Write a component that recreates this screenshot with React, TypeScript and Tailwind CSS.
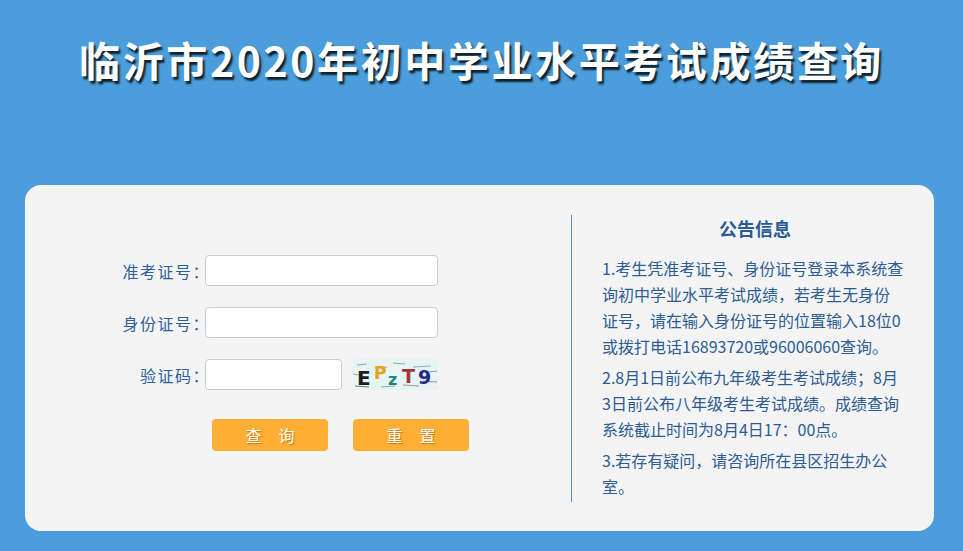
function Captcha() {
  return (
    <svg width="85" height="31" viewBox="0 0 85 31" className="ml-[11px]">
      <rect width="85" height="31" fill="#e6f4f3" />
      <g stroke="#8aa" strokeWidth="1">
        <line x1="4" y1="6" x2="14" y2="5" />
        <line x1="22" y1="9" x2="34" y2="8" stroke="#c99" />
        <line x1="40" y1="4" x2="52" y2="5" />
        <line x1="60" y1="8" x2="78" y2="7" stroke="#9ab" />
        <line x1="2" y1="27" x2="16" y2="28" stroke="#777" />
        <line x1="28" y1="28" x2="42" y2="27" />
        <line x1="50" y1="26" x2="66" y2="27" stroke="#b88" />
        <line x1="70" y1="22" x2="84" y2="23" stroke="#999" />
        <line x1="0" y1="15" x2="6" y2="16" stroke="#aaa" />
        <line x1="76" y1="13" x2="84" y2="12" stroke="#89a" />
      </g>
      <text x="4" y="26" fontFamily="'DejaVu Sans', sans-serif" fontWeight="bold" fontSize="20" fill="#1d1d1d">E</text>
      <text x="21" y="20" fontFamily="'DejaVu Sans', sans-serif" fontWeight="bold" fontSize="17" fill="#e8a21a">P</text>
      <text x="35" y="26" fontFamily="'DejaVu Sans', sans-serif" fontWeight="bold" fontSize="16" fill="#1b8a7a">z</text>
      <text x="49" y="24" fontFamily="'DejaVu Sans', sans-serif" fontWeight="bold" fontSize="19" fill="#a0353a">T</text>
      <text x="65" y="25" fontFamily="'DejaVu Sans', sans-serif" fontWeight="bold" fontSize="19" fill="#1c2a8c">9</text>
    </svg>
  );
}

function Row({ label, children }: { label: string; children: React.ReactNode }) {
  return (
    <div className="flex items-center h-[31px]">
      <label className="w-[185px] text-right text-[16px] tracking-[1.5px] text-[#2d5f9c]">
        {label}
      </label>
      <div className="ml-[-5px] flex items-center">{children}</div>
    </div>
  );
}

export default function App() {
  const font = { fontFamily: '"Noto Sans CJK SC", "Noto Sans", sans-serif' };
  return (
    <div className="min-h-screen w-full bg-[#4b9edb]" style={font}>
      <div className="h-[185px] pt-[38px]">
        <h1 className="text-center text-white font-bold text-[41px] leading-[42px] tracking-[2.6px] [text-shadow:2px_3px_2px_rgba(0,0,0,0.8)]">
          临沂市2020年初中学业水平考试成绩查询
        </h1>
      </div>

      <div className="mx-[25px] w-[909px] h-[346px] bg-[#f4f4f4] rounded-[16px] flex pt-[30px]">
        <div className="w-[546px] pt-[40px] flex flex-col gap-[21px]">
          <Row label="准考证号：">
            <input className="w-[233px] h-[31px] bg-white border border-[#cccccc] rounded-[4px] outline-none" />
          </Row>
          <Row label="身份证号：">
            <input className="w-[233px] h-[31px] bg-white border border-[#cccccc] rounded-[4px] outline-none" />
          </Row>
          <Row label="验证码：">
            <input className="w-[137px] h-[31px] bg-white border border-[#cccccc] rounded-[4px] outline-none" />
            <Captcha />
          </Row>
          <div className="flex ml-[187px] mt-[8px] gap-[25px]">
            <button className="w-[116px] h-[32px] bg-[#ffae36] rounded-[4px] text-white text-[16px] flex items-center justify-center gap-[17px] [text-shadow:1px_1px_1px_#c9780a]">
              <span>查</span>
              <span>询</span>
            </button>
            <button className="w-[116px] h-[32px] bg-[#ffae36] rounded-[4px] text-white text-[16px] flex items-center justify-center gap-[17px] [text-shadow:1px_1px_1px_#c9780a]">
              <span>重</span>
              <span>置</span>
            </button>
          </div>
        </div>

        <div className="w-px h-[287px] bg-[#4a8fd0]" />

        <div className="pl-[30px] w-[340px] text-[#2d5c94]">
          <h2 className="w-[306px] text-center font-bold text-[18px] leading-[26px] text-[#2a5b96]">
            公告信息
          </h2>
          <div className="mt-[14px] text-[16px] leading-[26px] whitespace-nowrap flex flex-col gap-[5px]">
            <p>
              1.考生凭准考证号、身份证号登录本系统查
              <br />
              询初中学业水平考试成绩，若考生无身份
              <br />
              证号，请在输入身份证号的位置输入18位0
              <br />
              或拨打电话16893720或96006060查询。
            </p>
            <p>
              2.8月1日前公布九年级考生考试成绩；8月
              <br />
              3日前公布八年级考生考试成绩。成绩查询
              <br />
              系统截止时间为8月4日17：00点。
            </p>
            <p>
              3.若存有疑问，请咨询所在县区招生办公
              <br />
              室。
            </p>
          </div>
        </div>
      </div>
    </div>
  );
}
